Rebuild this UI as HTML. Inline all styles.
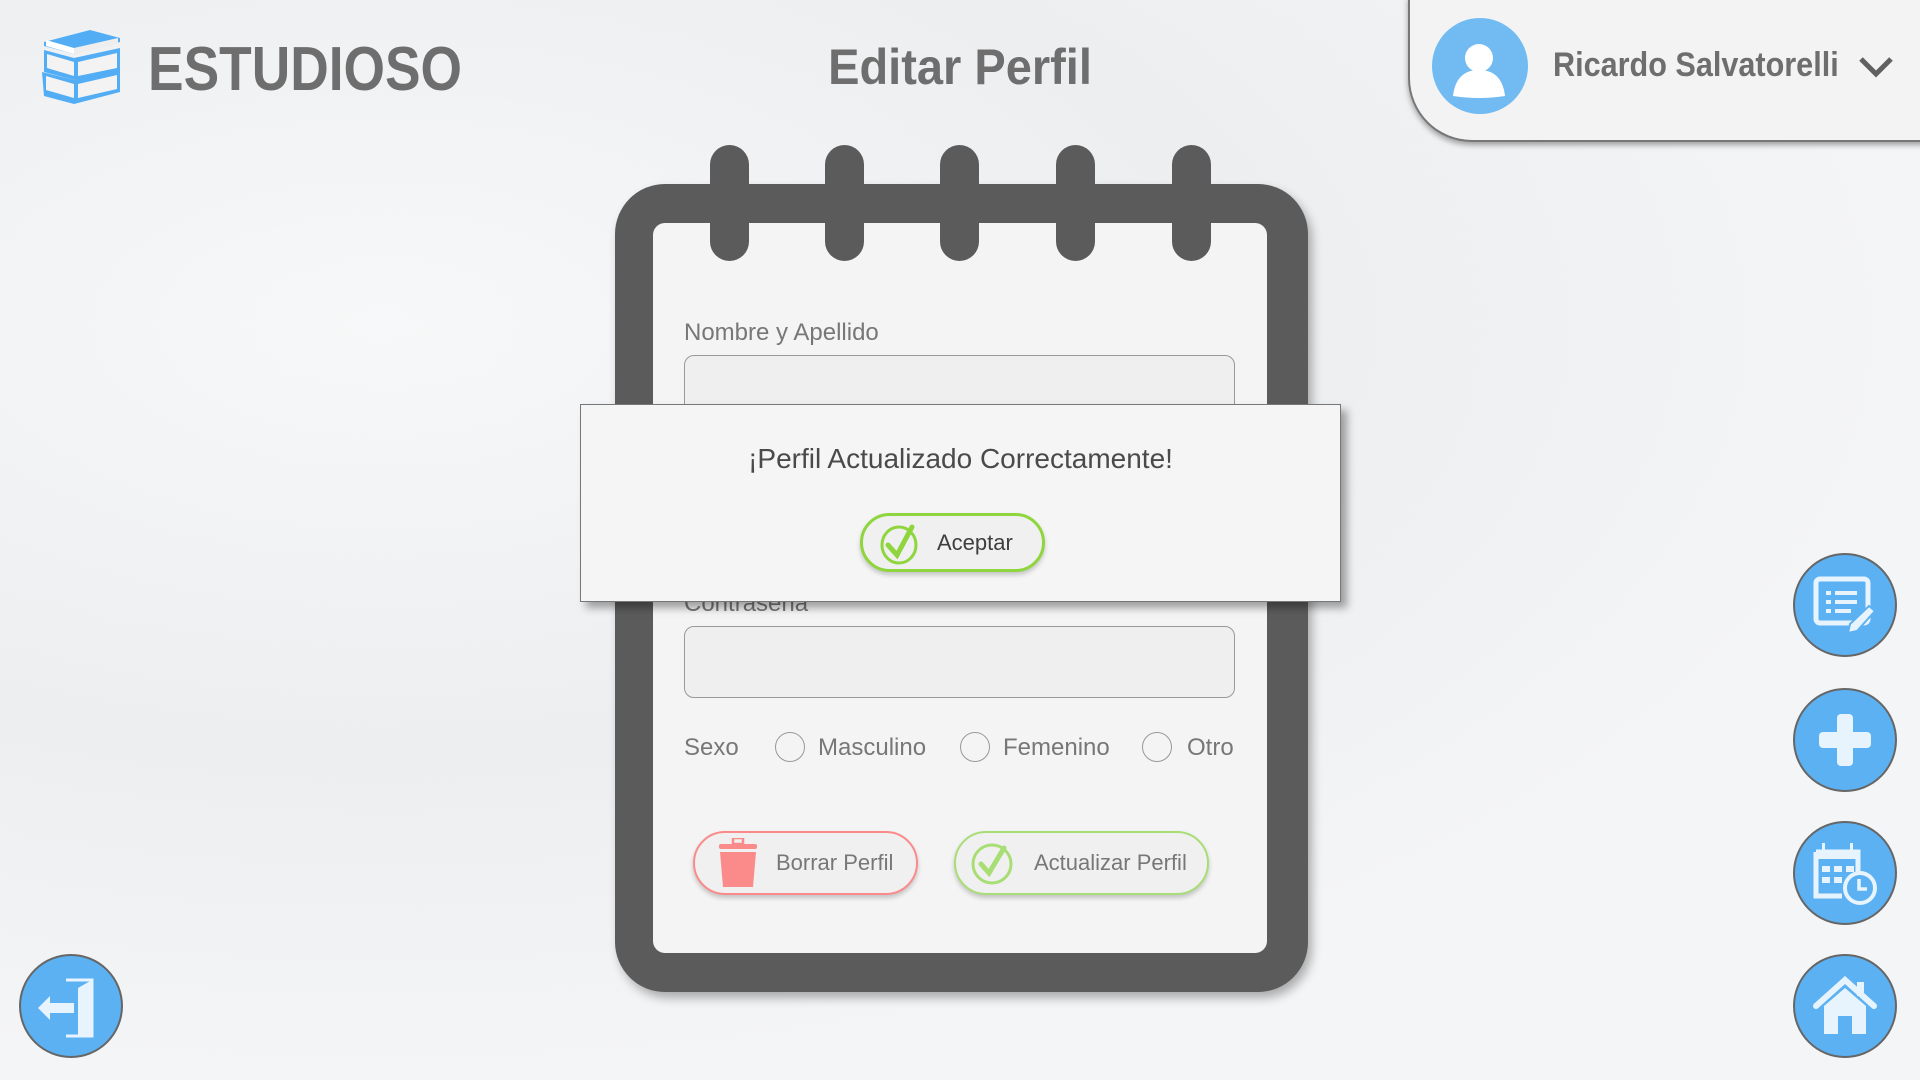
<!DOCTYPE html>
<html><head><meta charset="utf-8"><style>
*{margin:0;padding:0;box-sizing:border-box}
body{width:1920px;height:1080px;overflow:hidden;position:relative;font-family:"Liberation Sans",sans-serif;
background:radial-gradient(ellipse at 20% 30%,#f7f8f9 0,#eceef0 40%,#f4f5f6 70%),#eef0f1;color:#707070}
.abs{position:absolute}
.title{left:148px;top:34px;font-size:62px;font-weight:bold;color:#6e6e6e;transform:scaleX(0.86);transform-origin:left}
.h{left:0;width:1920px;text-align:center;top:38px;font-size:50px;font-weight:bold;color:#6e6e6e;transform:scaleX(0.94)}
.user{left:1408px;top:-4px;width:530px;height:146px;background:#f3f3f3;border:2px solid #777;border-top:none;border-right:none;border-bottom-left-radius:64px;box-shadow:0 3px 6px rgba(0,0,0,.35)}
.nb{left:615px;top:184px;width:693px;height:808px;background:#5b5b5b;border-radius:50px;box-shadow:4px 6px 10px rgba(0,0,0,.3)}
.inner{left:653px;top:223px;width:614px;height:730px;background:#f4f4f4;border-radius:12px}
.ring{width:39px;height:116px;top:145px;background:#5b5b5b;border-radius:20px}
.lbl{font-size:24px;color:#777}
.inp{left:684px;width:551px;height:72px;border:1.5px solid #999;border-radius:10px;background:#efefef}
.radio{width:30px;height:30px;border:1.5px solid #999;border-radius:50%;background:#f4f4f4}
.btn{height:64px;border-radius:32px;background:#f0f0f0;box-shadow:0 3px 5px rgba(0,0,0,.2);font-size:22px;color:#777;display:flex;align-items:center}
.circ{width:104px;height:104px;border-radius:50%;background:#5cb1f2;border:2.5px solid #666;display:flex;align-items:center;justify-content:center}
</style></head><body>
<svg class="abs" style="left:33px;top:28px" width="96" height="76" viewBox="0 0 82 76">
<path d="M4 14 L50 2 L80 10 L80 14 L34 26 L4 18Z" fill="#52adf5"/>
<path d="M6 12 L34 20 L34 26 L6 18Z" fill="#fff"/><path d="M34 20 L78 10 L78 16 L34 26Z" fill="#eee"/>
<path d="M4 22 L34 30 L80 20 L80 44 L34 52 L4 44Z" fill="#52adf5"/>
<path d="M7 26 L34 34 L34 48 L7 40Z" fill="#f3f3f3"/><path d="M38 34 L77 25 L77 40 L38 48Z" fill="#f3f3f3"/>
<path d="M2 44 L34 52 L80 42 L80 64 L34 76 L4 68Z" fill="#52adf5"/>
<path d="M6 48 L34 56 L34 70 L6 62Z" fill="#f3f3f3"/><path d="M38 56 L77 47 L77 61 L38 70Z" fill="#f3f3f3"/>
</svg>
<div class="abs title">ESTUDIOSO</div>
<div class="abs h">Editar Perfil</div>
<div class="abs user"></div>
<svg class="abs" style="left:1432px;top:18px" width="96" height="96" viewBox="0 0 96 96"><circle cx="48" cy="48" r="48" fill="#72bbf2"/><circle cx="47" cy="40" r="14" fill="#fff"/><path d="M21 78 Q24 52 47 52 Q70 52 73 78Q47 82 21 78Z" fill="#fff"/></svg>
<div class="abs" style="left:1553px;top:46px;font-size:34px;font-weight:bold;color:#6e6e6e;transform:scaleX(0.9);transform-origin:left">Ricardo Salvatorelli</div>
<svg class="abs" style="left:1858px;top:56px" width="36" height="22"><path d="M3 3 L18 18 L33 3" stroke="#606060" stroke-width="5" fill="none"/></svg>

<div class="abs nb"></div>
<div class="abs inner"></div>
<div class="abs ring" style="left:710px"></div><div class="abs ring" style="left:825px"></div><div class="abs ring" style="left:940px"></div><div class="abs ring" style="left:1056px"></div><div class="abs ring" style="left:1172px"></div>
<div class="abs lbl" style="left:684px;top:319px">Nombre y Apellido</div>
<div class="abs inp" style="top:355px"></div>
<div class="abs lbl" style="left:684px;top:590px">Contraseña</div>
<div class="abs inp" style="top:626px"></div>
<div class="abs lbl" style="left:684px;top:734px">Sexo</div>
<div class="abs radio" style="left:775px;top:732px"></div><div class="abs lbl" style="left:818px;top:734px">Masculino</div>
<div class="abs radio" style="left:960px;top:732px"></div><div class="abs lbl" style="left:1003px;top:734px">Femenino</div>
<div class="abs radio" style="left:1142px;top:732px"></div><div class="abs lbl" style="left:1187px;top:734px">Otro</div>
<div class="abs btn" style="left:693px;top:831px;width:225px;border:2px solid #fb8a8a">
<svg style="margin-left:24px" width="38" height="50" viewBox="0 0 38 50"><rect x="14" y="0" width="10" height="6" fill="none" stroke="#fb8a8a" stroke-width="2.5"/><rect x="0" y="6" width="38" height="5" rx="2" fill="#fb8a8a"/><path d="M1 14 H37 L34 49 H4Z" fill="#fb8a8a"/></svg>
<span style="margin-left:19px">Borrar Perfil</span></div>
<div class="abs btn" style="left:954px;top:831px;width:255px;border:2px solid #a9dd76">
<svg style="margin-left:14px" width="44" height="44" viewBox="0 0 44 44"><circle cx="22" cy="23" r="19" fill="none" stroke="#a9dd76" stroke-width="3"/><path d="M11 23 L19 32 L34 7" stroke="#a9dd76" stroke-width="5" fill="none" stroke-linecap="round"/></svg>
<span style="margin-left:20px">Actualizar Perfil</span></div>

<div class="abs" style="left:580px;top:404px;width:761px;height:198px;background:#f5f5f5;border:1.5px solid #777;box-shadow:6px 6px 8px rgba(0,0,0,.35)"></div>
<div class="abs" style="left:580px;width:761px;text-align:center;top:443px;font-size:28px;color:#4a4a4a">¡Perfil Actualizado Correctamente!</div>
<div class="abs btn" style="left:860px;top:513px;width:185px;height:59px;border:3px solid #8fd53e;color:#3e3e3e;font-size:22px">
<svg style="margin-left:16px" width="44" height="44" viewBox="0 0 44 44"><ellipse cx="20" cy="24" rx="17" ry="18" fill="none" stroke="#8fd53e" stroke-width="3"/><path d="M9 24 L18 34 L33 6" stroke="#8fd53e" stroke-width="5" fill="none" stroke-linecap="round"/></svg>
<span style="margin-left:14px">Aceptar</span></div>

<div class="abs circ" style="left:19px;top:954px"><svg width="70" height="64" viewBox="0 0 70 64"><path d="M30 6 H56 V62 H30" fill="none" stroke="#e8f4fd" stroke-width="3"/><path d="M42 14 L56 6 V62 H42Z" fill="#e8f4fd"/><path d="M2 34 L14 22 V29 H38 V39 H14 V46Z" fill="#e8f4fd"/></svg></div>
<div class="abs circ" style="left:1793px;top:553px"><svg width="64" height="58" viewBox="0 0 64 58"><rect x="3" y="3" width="52" height="44" rx="4" fill="none" stroke="#e8f4fd" stroke-width="5"/><rect x="13" y="15" width="5" height="4" fill="#e8f4fd"/><rect x="22" y="15" width="22" height="4" fill="#e8f4fd"/><rect x="13" y="24" width="5" height="4" fill="#e8f4fd"/><rect x="22" y="24" width="22" height="4" fill="#e8f4fd"/><rect x="13" y="33" width="5" height="4" fill="#e8f4fd"/><rect x="22" y="33" width="16" height="4" fill="#e8f4fd"/><path d="M56 30 L62 35 L44 55 L35 57 L37 48Z" fill="#e8f4fd" stroke="#5cb1f2" stroke-width="2"/></svg></div>
<div class="abs circ" style="left:1793px;top:688px"><svg width="56" height="56" viewBox="0 0 56 56"><rect x="20" y="2" width="16" height="52" rx="4" fill="#e8f4fd"/><rect x="2" y="20" width="52" height="16" rx="4" fill="#e8f4fd"/></svg></div>
<div class="abs circ" style="left:1793px;top:821px"><svg width="66" height="66" viewBox="0 0 66 66"><path d="M4 12 H46 V34 M30 56 H4 V12" fill="none" stroke="#e8f4fd" stroke-width="5"/><rect x="4" y="12" width="42" height="7" fill="#e8f4fd"/><rect x="10" y="3" width="3" height="12" fill="#e8f4fd"/><rect x="38" y="3" width="3" height="12" fill="#e8f4fd"/><rect x="10" y="26" width="8" height="6" fill="#e8f4fd"/><rect x="22" y="26" width="8" height="6" fill="#e8f4fd"/><rect x="34" y="26" width="8" height="6" fill="#e8f4fd"/><rect x="10" y="37" width="8" height="6" fill="#e8f4fd"/><rect x="22" y="37" width="8" height="6" fill="#e8f4fd"/><circle cx="48" cy="48" r="15" fill="#5cb1f2" stroke="#e8f4fd" stroke-width="4"/><path d="M47 39 V49 H55" fill="none" stroke="#e8f4fd" stroke-width="3.5"/></svg></div>
<div class="abs circ" style="left:1793px;top:954px"><svg width="64" height="60" viewBox="0 0 64 60"><path d="M3 30 L32 4 L61 30" fill="none" stroke="#e8f4fd" stroke-width="6" stroke-linecap="round"/><rect x="44" y="6" width="7" height="14" fill="#e8f4fd"/><path d="M11 30 L32 12 L53 30 V58 H39 V40 H25 V58 H11Z" fill="#e8f4fd"/></svg></div>
</body></html>
